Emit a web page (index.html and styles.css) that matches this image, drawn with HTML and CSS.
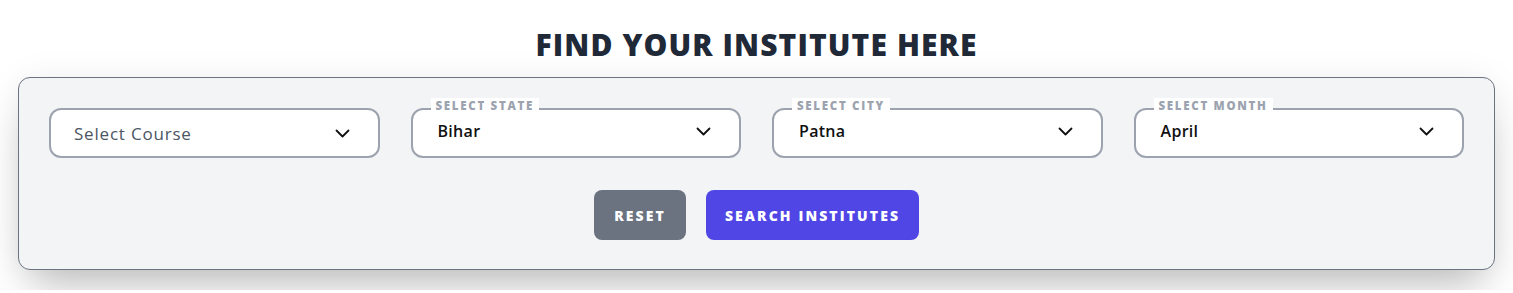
FILE: index.html
```html
<!DOCTYPE html>
<html lang="en">
<head>
  <meta charset="UTF-8" />
  <meta name="viewport" content="width=device-width, initial-scale=1.0" />
  <title>Find Your Institute</title>
  <link rel="stylesheet" href="styles.css">
</head>
<body>
  <section class="finder">
    <h2 class="finder-title">FIND YOUR INSTITUTE HERE</h2>

    <div class="finder-card">
      <div class="fields">
        <div class="field">
          <div class="select placeholder">
            <span>Select Course</span>
            <svg class="chevron" viewBox="0 0 15 9" width="15" height="9"><path d="M1.5 1.5l6 6 6-6" fill="none" stroke="#111" stroke-width="1.8" stroke-linecap="round" stroke-linejoin="round"/></svg>
          </div>
        </div>
        <div class="field">
          <span class="field-label">SELECT STATE</span>
          <div class="select filled">
            <span>Bihar</span>
            <svg class="chevron" viewBox="0 0 15 9" width="15" height="9"><path d="M1.5 1.5l6 6 6-6" fill="none" stroke="#111" stroke-width="1.8" stroke-linecap="round" stroke-linejoin="round"/></svg>
          </div>
        </div>
        <div class="field">
          <span class="field-label">SELECT CITY</span>
          <div class="select filled">
            <span>Patna</span>
            <svg class="chevron" viewBox="0 0 15 9" width="15" height="9"><path d="M1.5 1.5l6 6 6-6" fill="none" stroke="#111" stroke-width="1.8" stroke-linecap="round" stroke-linejoin="round"/></svg>
          </div>
        </div>
        <div class="field">
          <span class="field-label">SELECT MONTH</span>
          <div class="select filled">
            <span>April</span>
            <svg class="chevron" viewBox="0 0 15 9" width="15" height="9"><path d="M1.5 1.5l6 6 6-6" fill="none" stroke="#111" stroke-width="1.8" stroke-linecap="round" stroke-linejoin="round"/></svg>
          </div>
        </div>
      </div>

      <div class="actions">
        <button class="btn btn-reset">RESET</button>
        <button class="btn btn-search">SEARCH INSTITUTES</button>
      </div>
    </div>
  </section>
</body>
</html>
```

FILE: styles.css
```css
body {
  margin: 0;
  background: #fff;
  font-family: "Open Sans", "Liberation Sans", sans-serif;
}

.finder {
  padding: 27px 18px 20px;
}

.finder-title {
  margin: 0 0 14px;
  text-align: center;
  font-family: "Open Sans", "Liberation Sans", sans-serif;
  font-size: 30px;
  line-height: 36px;
  font-weight: 800;
  letter-spacing: 1.1px;
  color: #1f2937;
}

.finder-card {
  background: #f3f4f6;
  border: 1px solid #6b7280;
  border-radius: 12px;
  padding: 30px 30px 29px;
  box-shadow: 0 25px 40px -12px rgba(0, 0, 0, 0.25), 0 0 35px rgba(0, 0, 0, 0.06);
}

.fields {
  display: grid;
  grid-template-columns: repeat(4, 1fr);
  gap: 31px;
}

.field {
  position: relative;
}

.field-label {
  position: absolute;
  left: 20px;
  top: -10px;
  padding: 1px 5px 0;
  background: #fff;
  font-size: 11.5px;
  line-height: 13px;
  font-weight: 800;
  letter-spacing: 1.7px;
  color: #9ca3af;
}

.select {
  height: 50px;
  box-sizing: border-box;
  border: 2px solid #9ca3af;
  border-radius: 12px;
  background: #fff;
  display: flex;
  align-items: center;
  justify-content: space-between;
  padding: 0 28px 0 25px;
  font-size: 16px;
}

.select.placeholder {
  padding-left: 23px;
  color: #4b5563;
  font-size: 17px;
  letter-spacing: 0.8px;
}

.select.filled {
  padding-bottom: 4px;
  color: #111;
  font-weight: 600;
  letter-spacing: 0.3px;
}

.chevron {
  flex: none;
}

.actions {
  display: flex;
  justify-content: center;
  gap: 20px;
  margin-top: 32px;
}

.btn {
  height: 50px;
  padding: 0;
  border: none;
  border-radius: 8px;
  color: #fff;
  font-family: "Open Sans", "Liberation Sans", sans-serif;
  font-size: 14px;
  font-weight: 800;
  letter-spacing: 2.1px;
  cursor: pointer;
}

.btn-reset {
  width: 92px;
  background: #6b7280;
}

.btn-search {
  width: 213px;
  background: #4f46e5;
}
```
